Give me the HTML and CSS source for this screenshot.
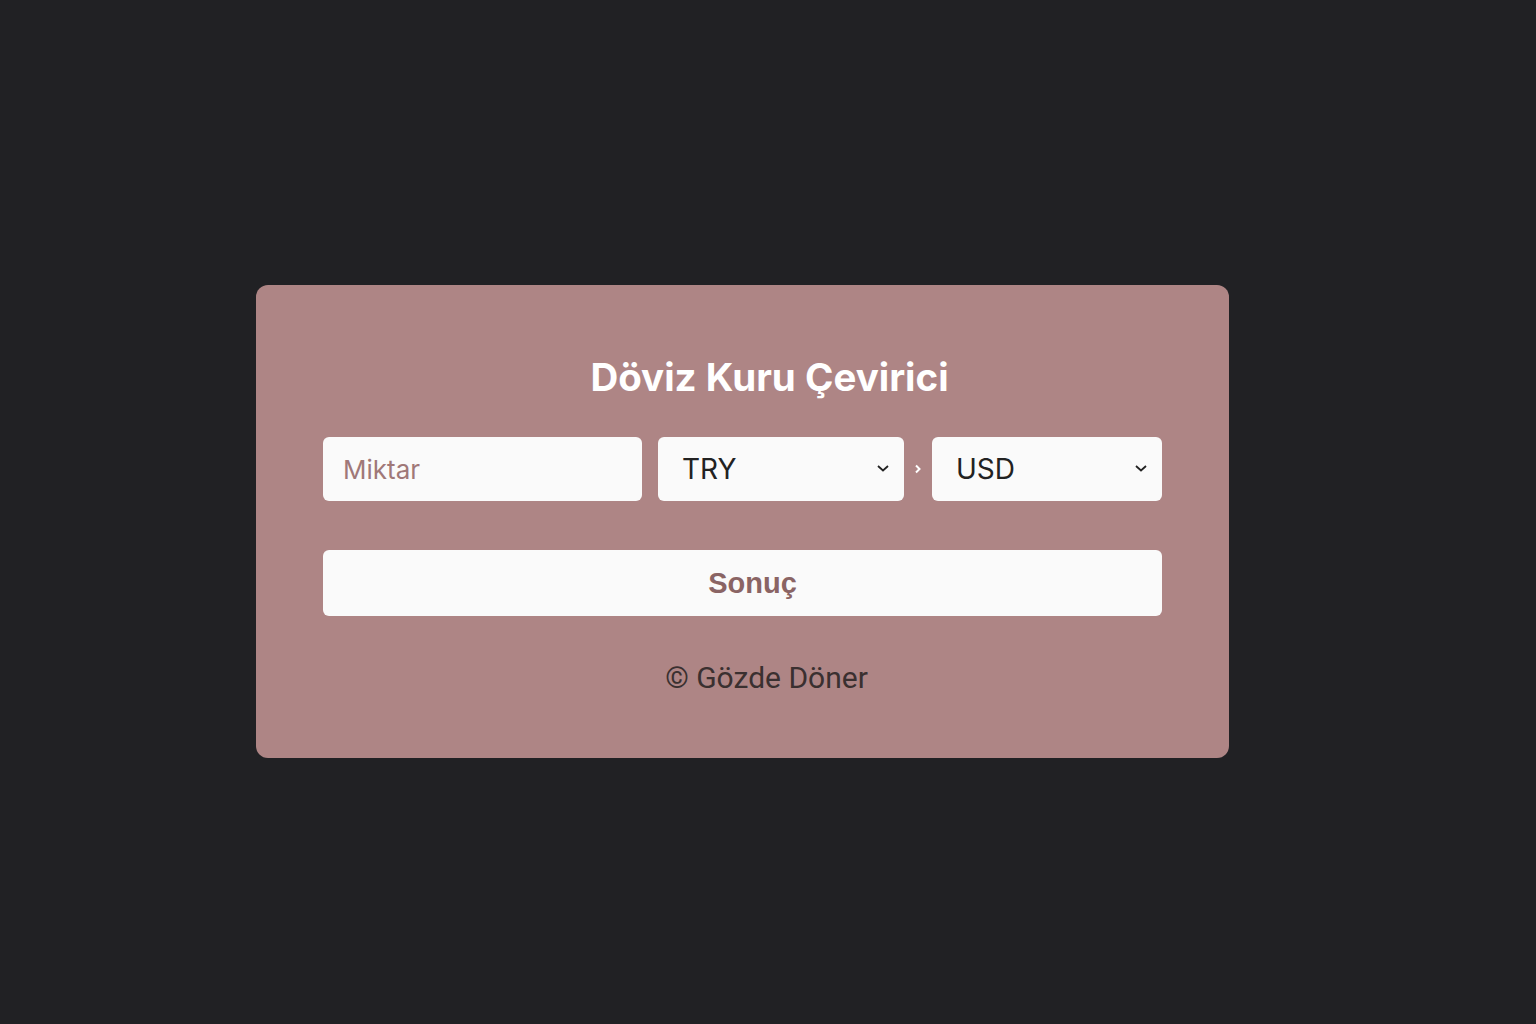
FILE: index.html
```html
<!DOCTYPE html>
<html>
<head>
  <title>Döviz Kuru Çevirici</title>
  <link rel="stylesheet" href="styles.css">
</head>
<body>
  <!-- Converter card -->
  <div class="converter-box">
    <h1>Döviz Kuru Çevirici</h1>
    <div class="input-row">
      <input type="text" id="amount" class="amount-input" placeholder="Miktar">
      <div class="select-wrap from-wrap">
        <select id="fromCurrency">
          <option>TRY</option>
          <option>USD</option>
          <option>EUR</option>
        </select>
        <svg class="chevron" width="14" height="10" viewBox="0 0 14 10"><path d="M2 3l5 4.5 5-4.5" fill="none" stroke="#222" stroke-width="1.8"/></svg>
      </div>
      <span class="arrow">
        <svg width="10" height="12" viewBox="0 0 10 12"><path d="M3 2.5l3.5 3.5-3.5 3.5" fill="none" stroke="#fff" stroke-width="2"/></svg>
      </span>
      <div class="select-wrap to-wrap">
        <select id="toCurrency">
          <option>USD</option>
          <option>TRY</option>
          <option>EUR</option>
        </select>
        <svg class="chevron" width="14" height="10" viewBox="0 0 14 10"><path d="M2 3l5 4.5 5-4.5" fill="none" stroke="#222" stroke-width="1.8"/></svg>
      </div>
    </div>
    <button class="result-button">Sonuç</button>
    <p class="footer">© Gözde Döner</p>
  </div>
</body>
</html>
```

FILE: styles.css
```css
body {
  margin: 0;
  padding: 285px 0 0 256px;
  background-color: #212124; /* Dark background */
  font-family: Inter, sans-serif;
}

.converter-box {
  box-sizing: border-box;
  width: 973px;
  height: 473px;
  background-color: #ae8585;
  border-radius: 12px;
  padding: 67px 67px 0 67px;
}

.converter-box h1 {
  margin: 0 0 35px 0;
  padding-left: 54px;
  text-align: center;
  color: #fff;
  font-size: 38.5px;
  font-weight: 700;
  line-height: 50px;
}

.input-row {
  display: flex;
  align-items: center;
  height: 64px;
}

.amount-input {
  box-sizing: border-box;
  width: 319px;
  height: 64px;
  margin-right: 16px;
  padding: 0 20px;
  border: none;
  border-radius: 6px;
  background-color: #fafafa;
  font-family: Inter, sans-serif;
  font-size: 26px;
  color: #222;
}

.amount-input::placeholder {
  color: #a07878;
}

.select-wrap {
  position: relative;
  height: 64px;
}

.from-wrap {
  width: 246px;
}

.to-wrap {
  width: 230px;
}

.select-wrap select {
  box-sizing: border-box;
  width: 100%;
  height: 64px;
  padding: 0 24px;
  border: none;
  border-radius: 6px;
  background-color: #fafafa;
  font-family: Inter, sans-serif;
  font-size: 28px;
  color: #222;
  appearance: none;
  -webkit-appearance: none;
}

.chevron {
  position: absolute;
  right: 14px;
  top: 26px;
  pointer-events: none;
}

.arrow {
  display: flex;
  justify-content: center;
  width: 28px;
}

.result-button {
  display: block;
  width: 100%;
  height: 66px;
  margin-top: 49px;
  padding-left: 26px;
  border: none;
  border-radius: 6px;
  background-color: #fafafa;
  color: #8a6464;
  font-family: "Liberation Sans", Arial, sans-serif;
  font-size: 29px;
  font-weight: 700;
  cursor: pointer;
}

.footer {
  margin: 44px 0 0 0;
  padding-left: 48px;
  text-align: center;
  color: #3a3030;
  font-family: Roboto, sans-serif;
  font-size: 30px;
}
```
